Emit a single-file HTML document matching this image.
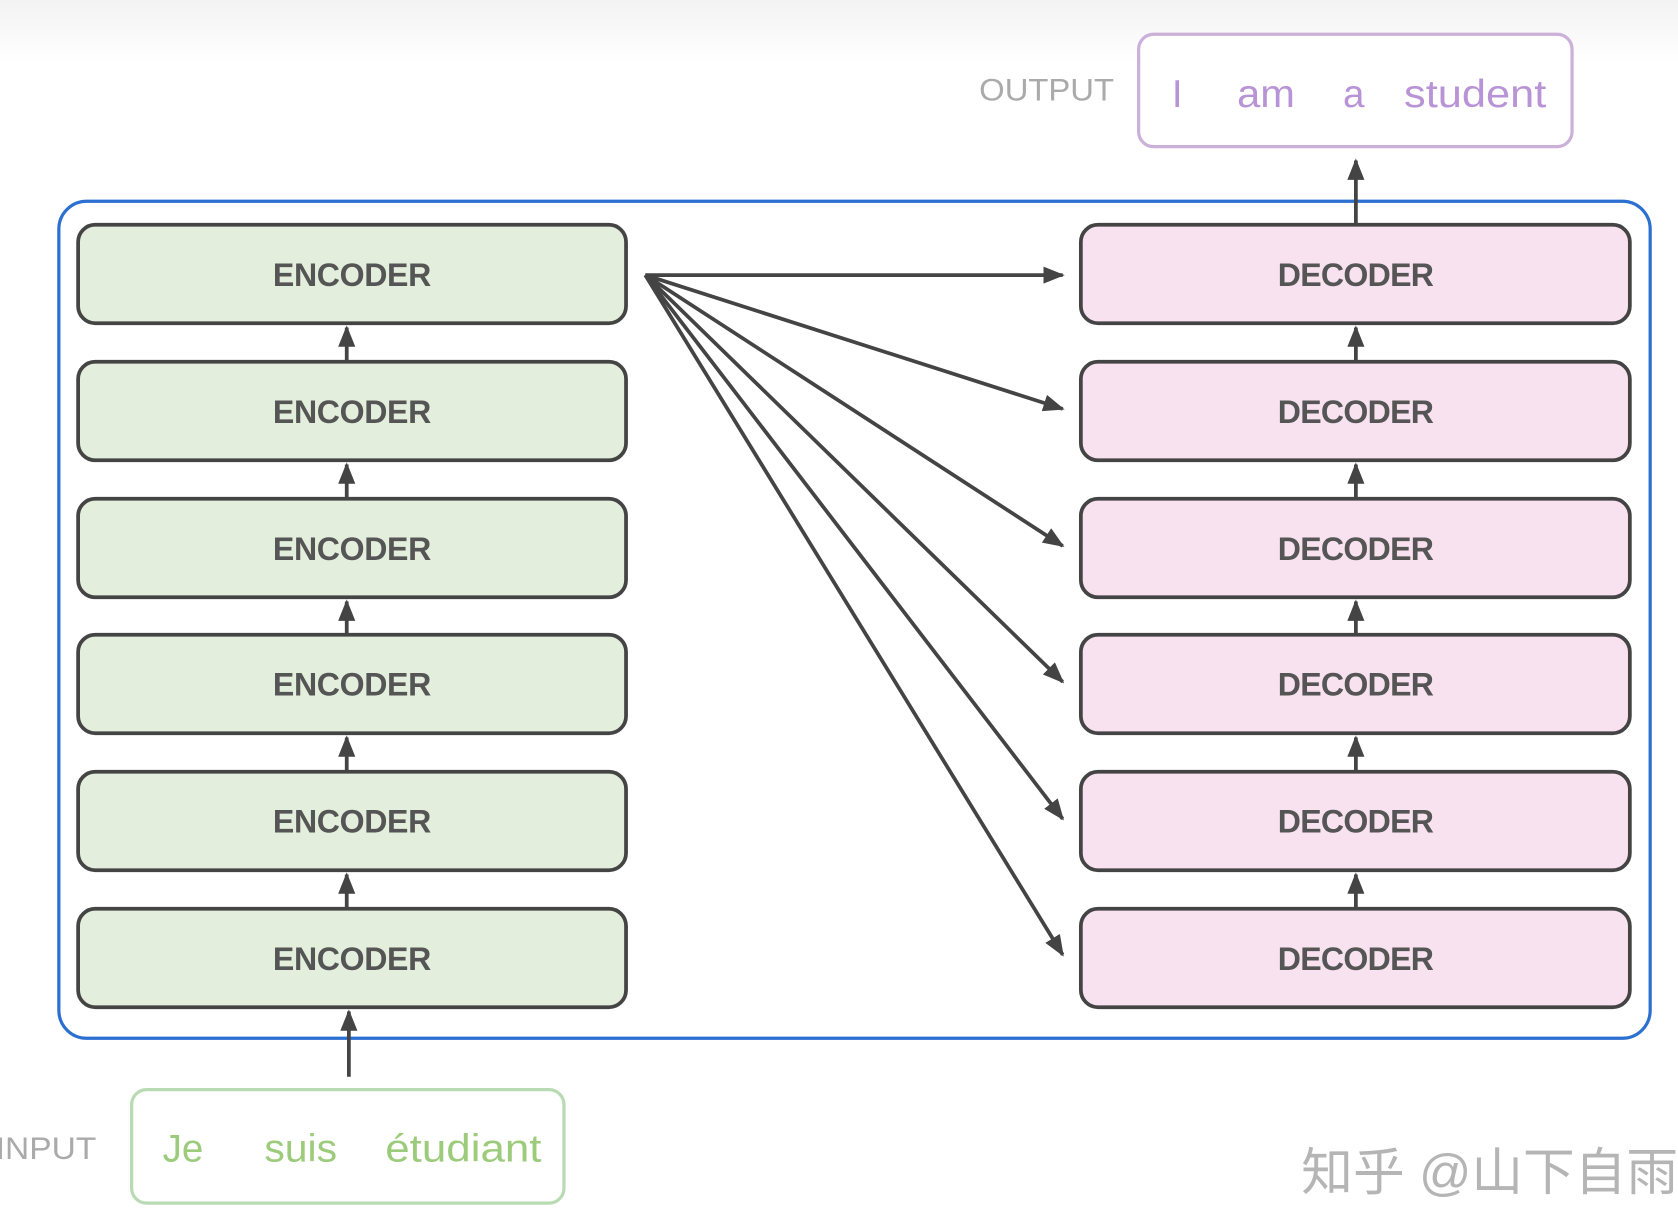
<!DOCTYPE html>
<html><head><meta charset="utf-8"><style>
html,body{margin:0;padding:0;background:#fff;width:1678px;height:1232px;overflow:hidden}
svg{display:block}
text{font-family:"Liberation Sans","DejaVu Sans",sans-serif}
</style></head><body>
<svg width="1678" height="1232" viewBox="0 0 1568 1151" preserveAspectRatio="none">
<defs>
<linearGradient id="bg" x1="0" y1="0" x2="0" y2="1"><stop offset="0" stop-color="#f3f3f3"/><stop offset="1" stop-color="#ffffff"/></linearGradient>
<marker id="ab" markerWidth="20" markerHeight="16" refX="18" refY="8" orient="auto" markerUnits="userSpaceOnUse"><path d="M0,0 L20,8 L0,16 z" fill="#444"/></marker>
</defs>
<rect x="0" y="0" width="1568" height="60" fill="url(#bg)"/>
<text x="915" y="94" font-size="29" fill="#aaa" textLength="126" lengthAdjust="spacingAndGlyphs">OUTPUT</text>
<rect x="1064" y="32" width="405" height="105" rx="14" fill="#fff" stroke="#cbb0d9" stroke-width="3"/>
<text x="1095" y="100" font-size="36" fill="#b894d6">I</text>
<text x="1156" y="100" font-size="36" fill="#b894d6" textLength="54" lengthAdjust="spacingAndGlyphs">am</text>
<text x="1255" y="100" font-size="36" fill="#b894d6">a</text>
<text x="1312" y="100" font-size="36" fill="#b894d6" textLength="133" lengthAdjust="spacingAndGlyphs">student</text>
<rect x="55" y="188" width="1487" height="782" rx="26" fill="none" stroke="#2b6fd1" stroke-width="3"/>
<line x1="1267" y1="209" x2="1267" y2="150" stroke="#444" stroke-width="3.5" marker-end="url(#ab)"/>
<g stroke="#444" stroke-width="3.5">
<rect x="73" y="210" width="512" height="92" rx="16" fill="#e3efdc"/>
<rect x="73" y="338" width="512" height="92" rx="16" fill="#e3efdc"/>
<rect x="73" y="466" width="512" height="92" rx="16" fill="#e3efdc"/>
<rect x="73" y="593" width="512" height="92" rx="16" fill="#e3efdc"/>
<rect x="73" y="721" width="512" height="92" rx="16" fill="#e3efdc"/>
<rect x="73" y="849" width="512" height="92" rx="16" fill="#e3efdc"/>
<rect x="1010" y="210" width="513" height="92" rx="16" fill="#f8e2ef"/>
<rect x="1010" y="338" width="513" height="92" rx="16" fill="#f8e2ef"/>
<rect x="1010" y="466" width="513" height="92" rx="16" fill="#f8e2ef"/>
<rect x="1010" y="593" width="513" height="92" rx="16" fill="#f8e2ef"/>
<rect x="1010" y="721" width="513" height="92" rx="16" fill="#f8e2ef"/>
<rect x="1010" y="849" width="513" height="92" rx="16" fill="#f8e2ef"/>
</g>
<g font-size="30" font-weight="bold" fill="#555" lengthAdjust="spacingAndGlyphs">
<text x="255" y="267" textLength="148">ENCODER</text><text x="255" y="395" textLength="148">ENCODER</text><text x="255" y="523" textLength="148">ENCODER</text>
<text x="255" y="650" textLength="148">ENCODER</text><text x="255" y="778" textLength="148">ENCODER</text><text x="255" y="906" textLength="148">ENCODER</text>
<text x="1194" y="267" textLength="146">DECODER</text><text x="1194" y="395" textLength="146">DECODER</text><text x="1194" y="523" textLength="146">DECODER</text>
<text x="1194" y="650" textLength="146">DECODER</text><text x="1194" y="778" textLength="146">DECODER</text><text x="1194" y="906" textLength="146">DECODER</text>
</g>
<g stroke="#444" stroke-width="3.5">
<line x1="324" y1="338" x2="324" y2="306" marker-end="url(#ab)"/>
<line x1="324" y1="466" x2="324" y2="434" marker-end="url(#ab)"/>
<line x1="324" y1="593" x2="324" y2="562" marker-end="url(#ab)"/>
<line x1="324" y1="721" x2="324" y2="689" marker-end="url(#ab)"/>
<line x1="324" y1="849" x2="324" y2="817" marker-end="url(#ab)"/>
<line x1="1267" y1="338" x2="1267" y2="306" marker-end="url(#ab)"/>
<line x1="1267" y1="466" x2="1267" y2="434" marker-end="url(#ab)"/>
<line x1="1267" y1="593" x2="1267" y2="562" marker-end="url(#ab)"/>
<line x1="1267" y1="721" x2="1267" y2="689" marker-end="url(#ab)"/>
<line x1="1267" y1="849" x2="1267" y2="817" marker-end="url(#ab)"/>
<line x1="326" y1="1006" x2="326" y2="945" marker-end="url(#ab)"/>
</g>
<g stroke="#444" stroke-width="3.5">
<line x1="603" y1="257" x2="993" y2="257" marker-end="url(#ab)"/>
<line x1="603" y1="257" x2="993" y2="382" marker-end="url(#ab)"/>
<line x1="603" y1="257" x2="993" y2="510" marker-end="url(#ab)"/>
<line x1="603" y1="257" x2="993" y2="637" marker-end="url(#ab)"/>
<line x1="603" y1="257" x2="993" y2="765" marker-end="url(#ab)"/>
<line x1="603" y1="257" x2="993" y2="892" marker-end="url(#ab)"/>
</g>
<text x="-4" y="1083" font-size="29" fill="#aaa" textLength="94" lengthAdjust="spacingAndGlyphs">INPUT</text>
<rect x="123" y="1018" width="404" height="106" rx="14" fill="#fff" stroke="#b8dbb3" stroke-width="3"/>
<text x="152" y="1085" font-size="36" fill="#9dcb7c">Je</text>
<text x="247" y="1085" font-size="36" fill="#9dcb7c" textLength="68" lengthAdjust="spacingAndGlyphs">suis</text>
<text x="360" y="1085" font-size="36" fill="#9dcb7c" textLength="146" lengthAdjust="spacingAndGlyphs">étudiant</text>
<text x="1216" y="1112" font-size="48" fill="#b5b5b5" font-family="'Noto Sans CJK SC',sans-serif" textLength="352" lengthAdjust="spacingAndGlyphs">知乎 @山下自雨</text>
</svg>
</body></html>
